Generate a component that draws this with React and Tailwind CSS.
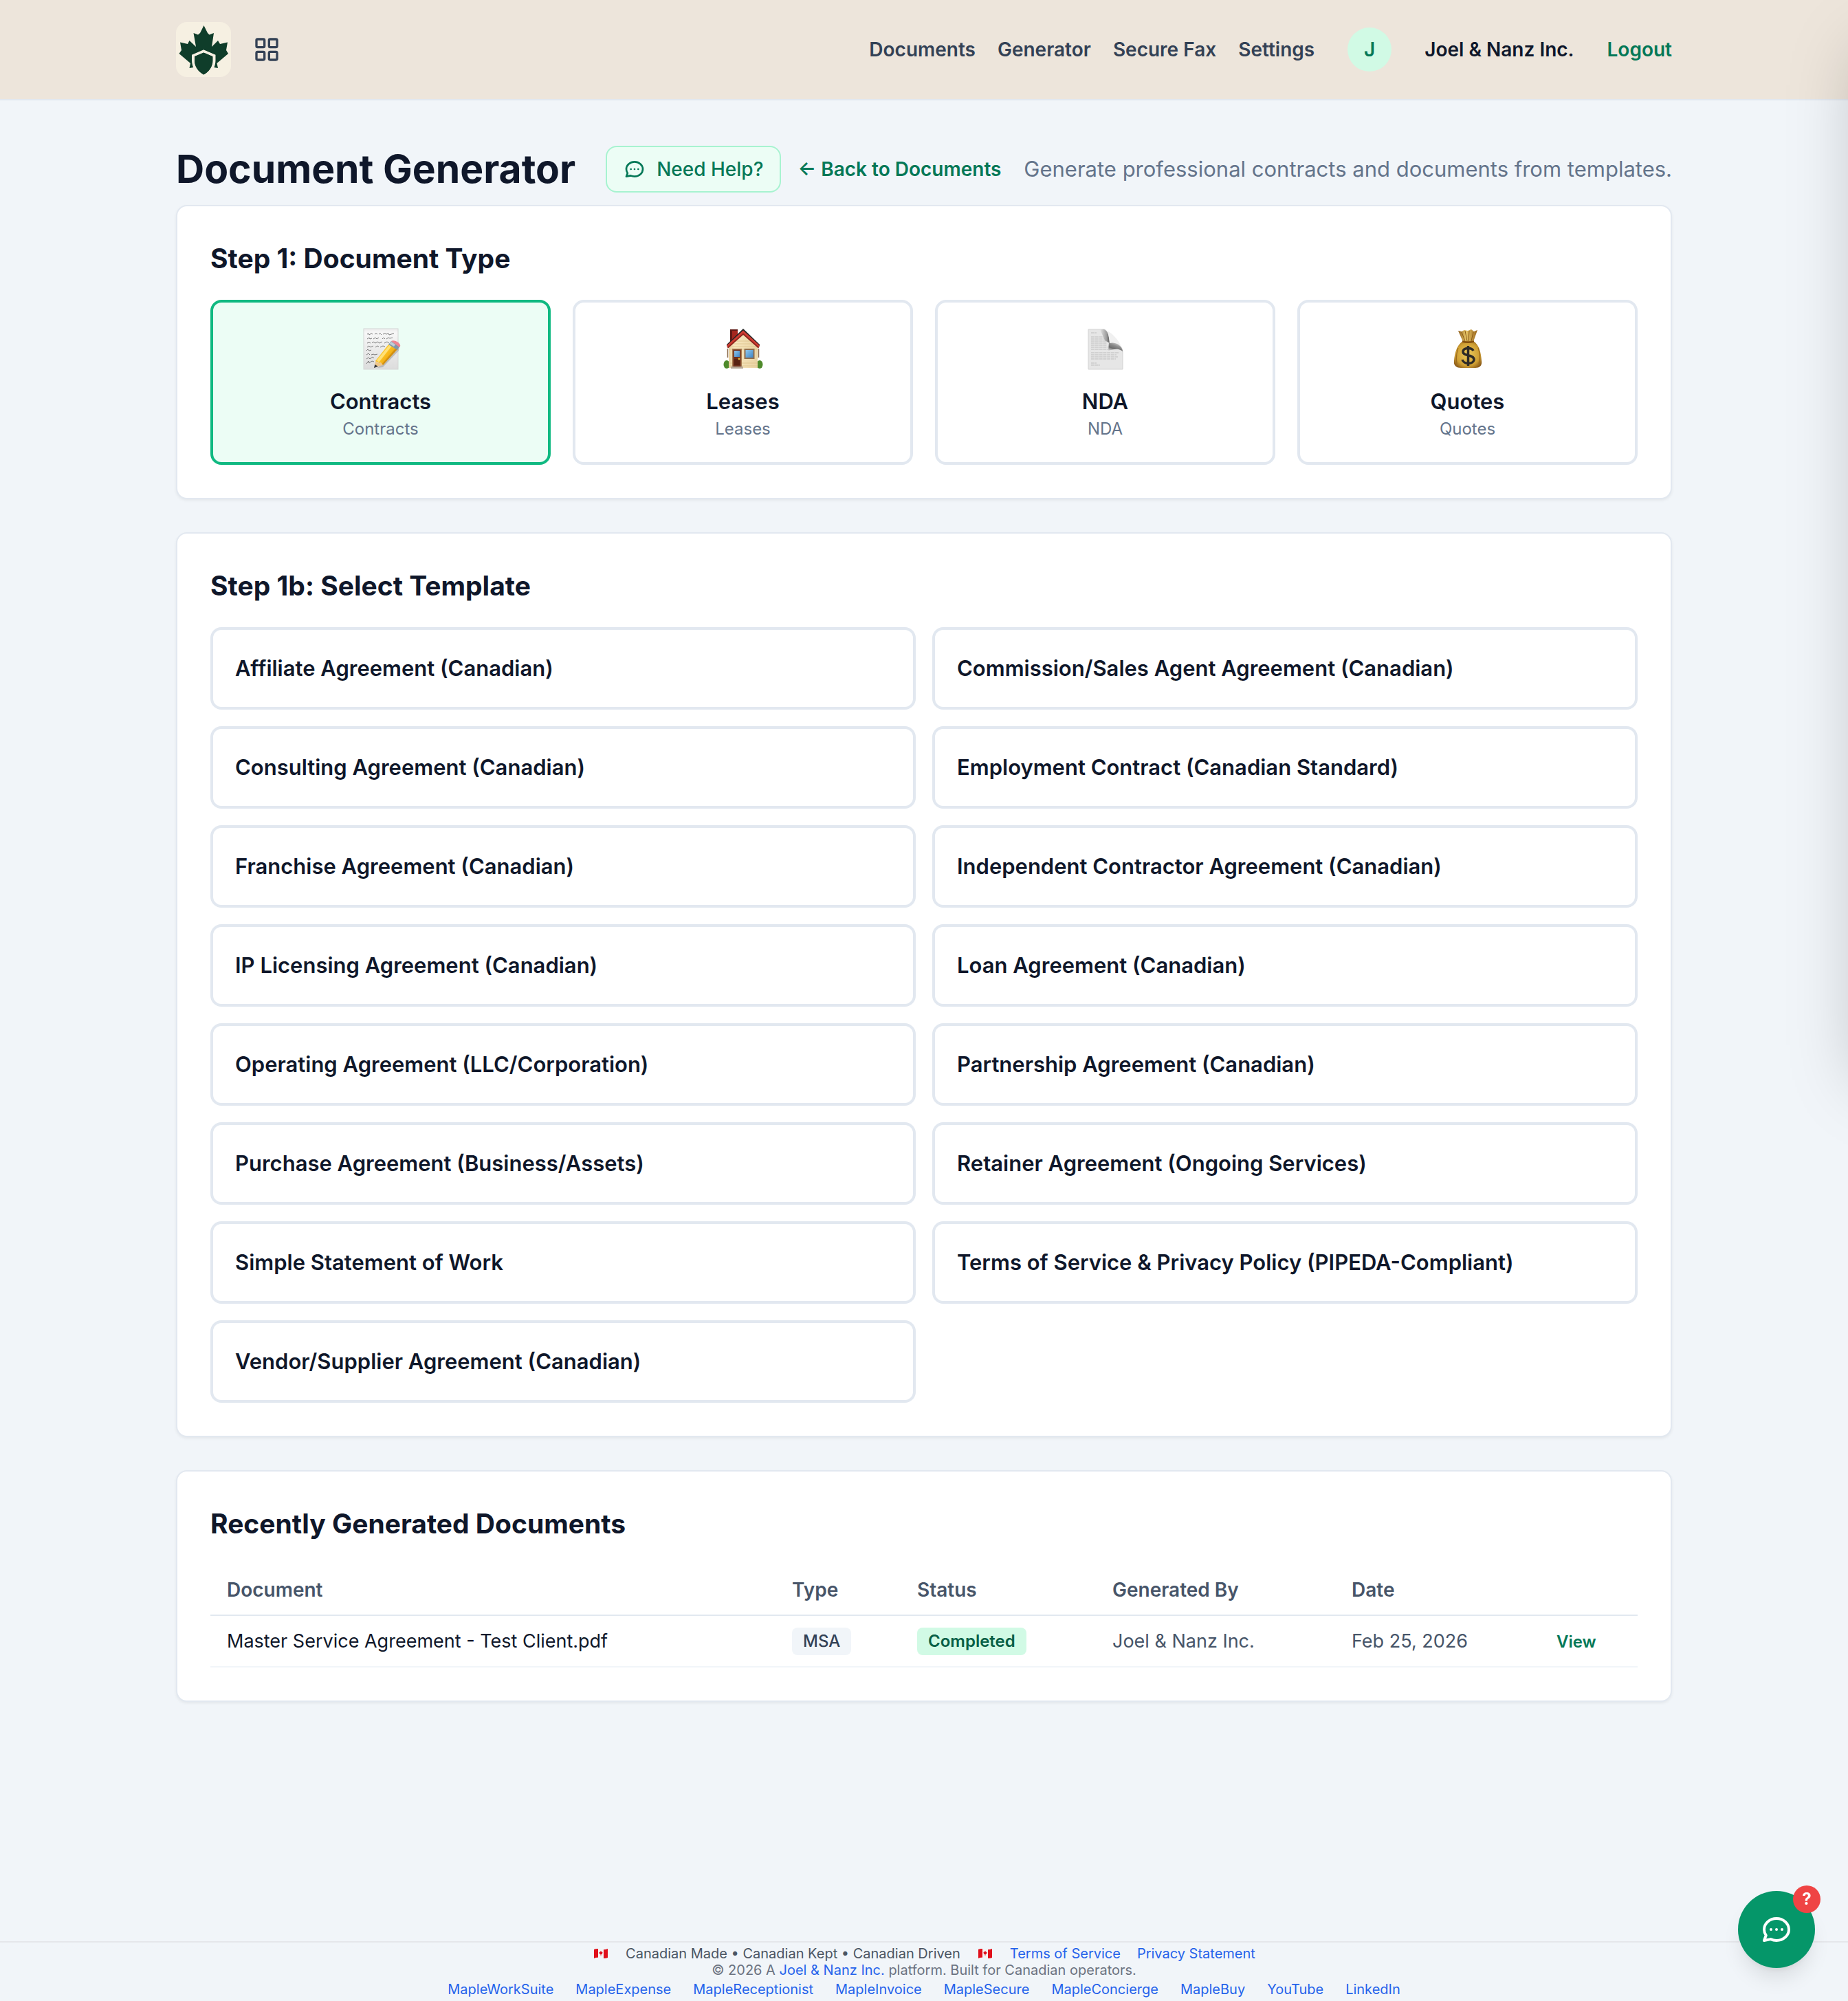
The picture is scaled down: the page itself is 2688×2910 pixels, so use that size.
import { useState } from "react";
import { LayoutGrid } from "lucide-react";

const NAV_LINKS = ["Documents", "Generator", "Secure Fax", "Settings"];

const TEMPLATES = [
  "Affiliate Agreement (Canadian)",
  "Commission/Sales Agent Agreement (Canadian)",
  "Consulting Agreement (Canadian)",
  "Employment Contract (Canadian Standard)",
  "Franchise Agreement (Canadian)",
  "Independent Contractor Agreement (Canadian)",
  "IP Licensing Agreement (Canadian)",
  "Loan Agreement (Canadian)",
  "Operating Agreement (LLC/Corporation)",
  "Partnership Agreement (Canadian)",
  "Purchase Agreement (Business/Assets)",
  "Retainer Agreement (Ongoing Services)",
  "Simple Statement of Work",
  "Terms of Service & Privacy Policy (PIPEDA-Compliant)",
  "Vendor/Supplier Agreement (Canadian)",
];

const DOCUMENTS = [
  { name: "Master Service Agreement - Test Client.pdf", type: "MSA", status: "Completed", by: "Joel & Nanz Inc.", date: "Feb 25, 2026" },
];

const PLATFORM_LINKS = [
  "MapleWorkSuite", "MapleExpense", "MapleReceptionist", "MapleInvoice", "MapleSecure",
  "MapleConcierge", "MapleBuy", "YouTube", "LinkedIn",
];

function MapleLogo() {
  return (
    <svg viewBox="0 0 80 80" className="h-20 w-20 rounded-2xl" aria-hidden="true">
      <rect width="80" height="80" fill="#f6f0e2" />
      <path
        fill="#0f3d2a"
        d="M40.500 5L46 16L48.500 18.500L55 16L52 36L61 27L64 32L75 29.500L73 41L76 46L59.500 60L61 67L55 66L57 58V48L40.500 41L24 48V58L25.500 66L19.500 67L21 60L4.500 46L8 41L6 29.500L17 32L19.500 27L29 36L25.500 16L32 18.500L35 16Z"
      />
      <path fill="#0f3d2a" stroke="#f6f0e2" strokeWidth="4" d="M40.300 42.500L55.500 49V56C55.500 66 50 73 40.300 79C31 73 25 66 25 56V49Z" />
      <path fill="#0f3d2a" d="M40.300 44.500L53 50V56C53 65 48.500 72 40.300 76.500C32 72 27 65 27 56V50Z" />
    </svg>
  );
}

function ChatIcon({ className }) {
  return (
    <svg viewBox="0 0 24 24" fill="none" stroke="currentColor" strokeWidth="2" strokeLinecap="round" strokeLinejoin="round" className={className} aria-hidden="true">
      <path d="M8 12h.01M12 12h.01M16 12h.01M21 12c0 4.418-4.030 8-9 8a9.863 9.863 0 01-4.255-.949L3 20l1.395-3.720C3.512 15.042 3 13.574 3 12c0-4.418 4.030-8 9-8s9 3.582 9 8z" />
    </svg>
  );
}

function MemoIcon() {
  return (
    <svg viewBox="0 0 72 72" className="h-[72px] w-[72px]" aria-hidden="true">
      <defs>
        <linearGradient id="memoPaper" x1="0" y1="0" x2="0" y2="1">
          <stop offset="0" stopColor="#ececec" />
          <stop offset="0.1" stopColor="#f7f7f7" />
          <stop offset="1" stopColor="#dcdcdc" />
        </linearGradient>
        <linearGradient id="memoPencil" x1="0" y1="0" x2="1" y2="0.8">
          <stop offset="0" stopColor="#ffdf57" />
          <stop offset="0.5" stopColor="#fcbf1e" />
          <stop offset="1" stopColor="#d98b09" />
        </linearGradient>
      </defs>
      <rect x="11" y="6" width="50" height="59" fill="url(#memoPaper)" stroke="#d4d6d5" />
      <g fill="none" stroke="#6d6d6d" strokeWidth="0.900">
        <path d="M16 14l2-1 1 2 3-2 2 1M27 14l2-1 2 1M33 14l2-1 2 2M39 14l3-1 2 1 3-1 1 2 3-1 4-1" />
        <path d="M16 21l3-2 1 2 3-1M25 21l3-2 2 2 3-2M38 21l2-2 2 2M44 21l3-2 2 1 4-1" />
        <path d="M16 27l3-1 2 1M23 27l2-2 3 2 3-2 3 2 4-2M41 27l4-2 3 2" />
        <path d="M16 33l3-2 2 2 4-2M28 33l3-2 2 1M35 33l4-2 3 1" />
        <path d="M15 38l2-2 2 2 3-1M15 44l3-2 2 2M22 44l3-1 2 1 4-1" />
        <path d="M15 50l3-2 2 2 4-3 2 2M15 57l3-4 1 3 4-3 3 1" />
      </g>
      <path fill="#8b8b8b" opacity="0.45" d="M31 63L61 35L64 29L62 38L39 62Z" />
      <path fill="url(#memoPencil)" d="M28 53L47 29L60 36L39 59Z" />
      <path fill="#ffe98b" opacity="0.8" d="M30 52L49 29L52 31L33 55Z" />
      <path fill="#b5740a" opacity="0.5" d="M37 58L57 35L60 36L39 59Z" />
      <path fill="#eec68b" d="M28 53L27 62L39 59L36 55L32 56Z" />
      <path fill="#393939" d="M27.300 58L26 63L32 61Z" />
      <path fill="#8097a8" d="M47 29L51 24L63 32L60 37Z" />
      <path fill="#c0ced7" d="M48.500 28L51 25L57 29L55 32Z" />
      <path fill="#ef8591" d="M51 24C55 21 66 27 64 32L63 33Z" />
    </svg>
  );
}

function HouseIcon() {
  return (
    <svg viewBox="0 0 72 72" className="h-[72px] w-[72px]" aria-hidden="true">
      <defs>
        <linearGradient id="houseWall" x1="0" y1="0" x2="1" y2="0">
          <stop offset="0" stopColor="#e8cf9f" />
          <stop offset="0.2" stopColor="#f8e7bf" />
          <stop offset="1" stopColor="#e9d3a3" />
        </linearGradient>
        <linearGradient id="houseGlass" x1="0" y1="0" x2="1" y2="1">
          <stop offset="0" stopColor="#8fc6ec" />
          <stop offset="1" stopColor="#3f86c6" />
        </linearGradient>
      </defs>
      <path fill="#a5271f" d="M17 7H28V25H17Z" />
      <path fill="#5f1a16" d="M17 7H20V25H17ZM17 7H28V9H17Z" />
      <ellipse cx="12" cy="58" rx="4.500" ry="6" fill="#4e8a2b" />
      <ellipse cx="60" cy="58" rx="4.500" ry="6" fill="#4e8a2b" />
      <path fill="url(#houseWall)" d="M36 12L57 31V63H15V31Z" />
      <path d="M26 24H47M22 28H51M17 32H56M15 36H57M15 56H57M15 60H57" stroke="#dcc18a" strokeWidth="0.800" />
      <path fill="#252525" d="M36 6L12 29V32L36 10L60 32V29Z" />
      <path fill="#cf3b31" d="M36 8.500L12 30.500L14 34L36 14L58 34L60 30.500Z" />
      <path fill="#8f231d" d="M36 12.500L13 33L14 34.500L36 15L58 34.500L59 33Z" />
      <rect x="20" y="35" width="14" height="27" fill="#a77a50" />
      <rect x="21.500" y="36.500" width="11" height="25.500" fill="#6f2e1b" />
      <rect x="23" y="38" width="8" height="9" fill="url(#houseGlass)" />
      <rect x="23" y="50" width="8" height="9" fill="#582213" />
      <circle cx="30" cy="50" r="1.400" fill="#e8bb3c" />
      <path fill="#b5a797" d="M18 61H36V64H18Z" />
      <rect x="37.500" y="35" width="15" height="15" fill="#8f6d4d" />
      <rect x="39.500" y="37" width="11" height="11" fill="url(#houseGlass)" />
      <path d="M13.500 35V48M58.500 35V48" stroke="#8a6a4a" strokeWidth="1.500" />
    </svg>
  );
}

function PageIcon() {
  return (
    <svg viewBox="0 0 72 72" className="h-[72px] w-[72px]" aria-hidden="true">
      <defs>
        <linearGradient id="pageFold" x1="0.2" y1="1" x2="0.8" y2="0">
          <stop offset="0" stopColor="#d9d9d9" />
          <stop offset="0.3" stopColor="#6d6d6d" />
          <stop offset="0.6" stopColor="#8f8f8f" />
          <stop offset="1" stopColor="#e9e9e9" />
        </linearGradient>
        <linearGradient id="pageCurl" x1="0" y1="0" x2="1" y2="0">
          <stop offset="0" stopColor="#e2e2e2" />
          <stop offset="0.7" stopColor="#9b9b9b" />
          <stop offset="1" stopColor="#555555" />
        </linearGradient>
      </defs>
      <path fill="#e6e6e6" stroke="#d3d3d3" d="M11 7H34C40 9 41 17 42 27C52 25 60 30 61 39V65H11Z" />
      <path d="M15 12H23M15 18H36M15 21H37M15 24H38M15 27H38M15 30H38M15 33H39M15 36H40M15 41H56M15 44H52M15 47H54M15 50H51M15 56H23M15 59H28" stroke="#bdbdbd" strokeWidth="1" strokeDasharray="5 0.800" />
      <path fill="url(#pageCurl)" d="M28 7H34C40 9 41 17 42 27L35 23Z" />
      <path fill="url(#pageFold)" d="M41 26C52 25 60 30 61 39C55 34 47 36 40 38Z" />
      <path fill="#f0f0f0" d="M34 7C43 10 56 21 61 37C58 29 50 25 42 27C41 17 40 9 34 7Z" />
    </svg>
  );
}

function MoneyBagIcon() {
  return (
    <svg viewBox="0 0 72 72" className="h-[72px] w-[72px]" aria-hidden="true">
      <defs>
        <radialGradient id="bagBody" cx="0.5" cy="0.5" r="0.6">
          <stop offset="0" stopColor="#eccb5c" />
          <stop offset="0.7" stopColor="#cf9f33" />
          <stop offset="1" stopColor="#8b5a17" />
        </radialGradient>
        <linearGradient id="bagNeck" x1="0" y1="0" x2="1" y2="0">
          <stop offset="0" stopColor="#8b5a17" />
          <stop offset="0.4" stopColor="#e8c868" />
          <stop offset="1" stopColor="#9b671d" />
        </linearGradient>
      </defs>
      <path fill="url(#bagNeck)" d="M22 9L27 10L31 8L36 9L41 7L45 10L50 8L44 25H29Z" />
      <path d="M27 11L32 24M32 9L35 24M38 9L37 24M44 11L41 24" stroke="#8b5a17" strokeWidth="1" />
      <path fill="url(#bagBody)" d="M29 24H44C52 29 55 39 56 53C57 60 53 63 47 63H26C19 63 15 59 16 53C17 39 21 29 29 24Z" />
      <path d="M22 34C19 42 19 50 20 57M51 34C54 42 54 50 52 57" stroke="#9b6a1c" strokeWidth="1.200" fill="none" />
      <path d="M28 24.500Q36 27 45 24.500" stroke="#83500f" strokeWidth="2.500" fill="none" />
      <path d="M44 38C42 33 29 33 29 39.500C29 46.500 45 43 45 51C44.500 58 29.500 58 28 51M36.500 31V60" stroke="#2d2a26" strokeWidth="3.500" fill="none" />
    </svg>
  );
}

function CanadaFlag() {
  return (
    <svg viewBox="0 0 24 24" className="h-6 w-6" role="img" aria-label="Canada">
      <path fill="#f4f4f4" d="M2 6C8 3 15 8 22 5V18C15 21 8 16 2 19Z" />
      <path fill="#e0101b" d="M2 6Q5 4.700 8 5V17.800Q5 17.500 2 19ZM16 6.200Q19 6.200 22 5V18Q19 19.300 16 19Z" />
      <path fill="#e0101b" d="M12 8L13 9.500L14.500 10L14 12.500L12.300 13.500V15.500H11.700V13.500L10 12.500L9.500 10L11 9.500Z" />
    </svg>
  );
}

const DOCUMENT_TYPES = [
  { id: "contracts", label: "Contracts", Icon: MemoIcon },
  { id: "leases", label: "Leases", Icon: HouseIcon },
  { id: "nda", label: "NDA", Icon: PageIcon },
  { id: "quotes", label: "Quotes", Icon: MoneyBagIcon },
];

function Card({ title, children }) {
  return (
    <section className="rounded-2xl border-2 border-[#e2e8f0] bg-white p-12 shadow-[0_2px_4px_rgba(0,0,0,0.06)]">
      <h2 className="mb-8 text-[39px] leading-14 font-bold">{title}</h2>
      {children}
    </section>
  );
}

export default function App() {
  const [selectedType, setSelectedType] = useState("contracts");

  return (
    <div className="flex min-h-screen flex-col bg-[#f1f5f9] font-[Inter,sans-serif] text-[28px] leading-10 text-[#0f172a]">
      <header className="border-b-2 border-[#e2e8f0] bg-[#ede5db]">
        <div className="mx-auto flex h-36 max-w-[2304px] items-center justify-between px-16">
          <div className="flex items-center gap-4">
            <a href="#home" aria-label="Home"><MapleLogo /></a>
            <button type="button" aria-label="Apps" className="rounded-2xl p-4 text-[#334155]">
              <LayoutGrid size={40} />
            </button>
          </div>
          <div className="flex items-center gap-12 font-semibold">
            <nav className="flex items-center gap-8 text-[#334155]">
              {NAV_LINKS.map((link) => (
                <a key={link} href="#nav">{link}</a>
              ))}
            </nav>
            <div className="flex h-16 w-16 items-center justify-center rounded-full bg-[#d1fae5] text-[#047857]">J</div>
            <span>Joel &amp; Nanz Inc.</span>
            <button type="button" className="text-[#047857]">Logout</button>
          </div>
        </div>
      </header>

      <main className="mx-auto w-full max-w-[2304px] flex-1 px-16 py-16">
        <div className="mb-4 flex items-center whitespace-nowrap">
          <h1 className="text-[57px] leading-[72px] font-bold">Document Generator</h1>
          <button type="button" className="ml-11 flex items-center gap-4 rounded-2xl border-2 border-[#a7f3d0] bg-[#ecfdf5] px-6 py-3 font-medium text-[#047857]">
            <ChatIcon className="h-8 w-8" />
            Need Help?
          </button>
          <a href="#documents" className="ml-6 font-semibold text-[#047857]">← Back to Documents</a>
          <p className="ml-auto text-[31px] leading-12 text-[#64748b]">Generate professional contracts and documents from templates.</p>
        </div>

        <div className="flex flex-col gap-12">
          <Card title="Step 1: Document Type">
            <div className="grid grid-cols-4 gap-8">
              {DOCUMENT_TYPES.map(({ id, label, Icon }) => (
                <button
                  key={id}
                  type="button"
                  onClick={() => setSelectedType(id)}
                  className={`flex flex-col items-center rounded-2xl border-4 p-8 ${
                    selectedType === id ? "border-[#10b981] bg-[#ecfdf5]" : "border-[#e2e8f0] bg-white"
                  }`}
                >
                  <span className="mb-4"><Icon /></span>
                  <span className="text-[31px] leading-12 font-semibold">{label}</span>
                  <span className="text-2xl text-[#64748b]">{label}</span>
                </button>
              ))}
            </div>
          </Card>

          <Card title="Step 1b: Select Template">
            <div className="grid grid-cols-2 gap-6">
              {TEMPLATES.map((name) => (
                <button key={name} type="button" className="rounded-2xl border-4 border-[#e2e8f0] bg-white p-8 text-left text-[31px] leading-12 font-semibold">
                  {name}
                </button>
              ))}
            </div>
          </Card>

          <Card title="Recently Generated Documents">
            <table className="w-full text-left">
              <thead>
                <tr className="border-b-2 border-[#e2e8f0] text-[#475569]">
                  <th className="px-6 py-4 font-semibold">Document</th>
                  <th className="w-[182px] px-6 py-4 font-semibold">Type</th>
                  <th className="w-[284px] px-6 py-4 font-semibold">Status</th>
                  <th className="w-[348px] px-6 py-4 font-semibold">Generated By</th>
                  <th className="w-[298px] px-6 py-4 font-semibold">Date</th>
                  <th className="w-[142px] px-6 py-4" aria-label="Actions"></th>
                </tr>
              </thead>
              <tbody className="text-[27px]">
                {DOCUMENTS.map((doc) => (
                  <tr key={doc.name} className="border-b-2 border-[#f1f5f9] text-[#475569]">
                    <td className="px-6 py-4 text-[#0f172a]">{doc.name}</td>
                    <td className="px-6 py-4">
                      <span className="inline-block rounded-lg bg-[#f1f5f9] px-4 py-1 text-2xl font-medium text-[#334155]">{doc.type}</span>
                    </td>
                    <td className="px-6 py-4">
                      <span className="inline-block rounded-lg bg-[#d1fae5] px-4 py-1 text-2xl font-semibold text-[#065f46]">{doc.status}</span>
                    </td>
                    <td className="px-6 py-4">{doc.by}</td>
                    <td className="px-6 py-4">{doc.date}</td>
                    <td className="px-6 py-4">
                      <a href="#view" className="text-2xl font-semibold text-[#047857]">View</a>
                    </td>
                  </tr>
                ))}
              </tbody>
            </table>
          </Card>
        </div>
      </main>

      <footer className="border-t-2 border-[#e5e7eb] pt-1 pb-[5px] text-center text-xl leading-6 text-[#6b7280]">
        <div className="flex items-center justify-center gap-6">
          <CanadaFlag />
          <span className="text-[#4b5563]">Canadian Made • Canadian Kept • Canadian Driven</span>
          <CanadaFlag />
          <a href="#terms" className="text-[#2563eb]">Terms of Service</a>
          <a href="#privacy" className="text-[#2563eb]">Privacy Statement</a>
        </div>
        <p>
          © 2026 A <a href="#company" className="text-[#2563eb]">Joel &amp; Nanz Inc.</a> platform. Built for Canadian operators.
        </p>
        <div className="mt-1 flex justify-center gap-8">
          {PLATFORM_LINKS.map((link) => (
            <a key={link} href="#platform" className="text-[#2563eb]">{link}</a>
          ))}
        </div>
      </footer>

      {/* closed help drawer, parked past the right edge */}
      <aside className="fixed top-0 left-full h-[1544px] w-[768px] bg-white shadow-[0_50px_100px_-24px_rgba(0,0,0,0.25)]" aria-hidden="true" />

      <button type="button" aria-label="Open help chat" className="fixed right-12 bottom-12 flex h-28 w-28 items-center justify-center rounded-full bg-[#059669] text-white shadow-[0_20px_30px_-6px_rgba(0,0,0,0.1),0_8px_12px_-8px_rgba(0,0,0,0.1)]">
        <ChatIcon className="h-12 w-12" />
        <span className="absolute -top-2 -right-2 flex h-10 w-10 items-center justify-center rounded-full bg-[#ef4444] text-2xl font-bold">?</span>
      </button>
    </div>
  );
}
